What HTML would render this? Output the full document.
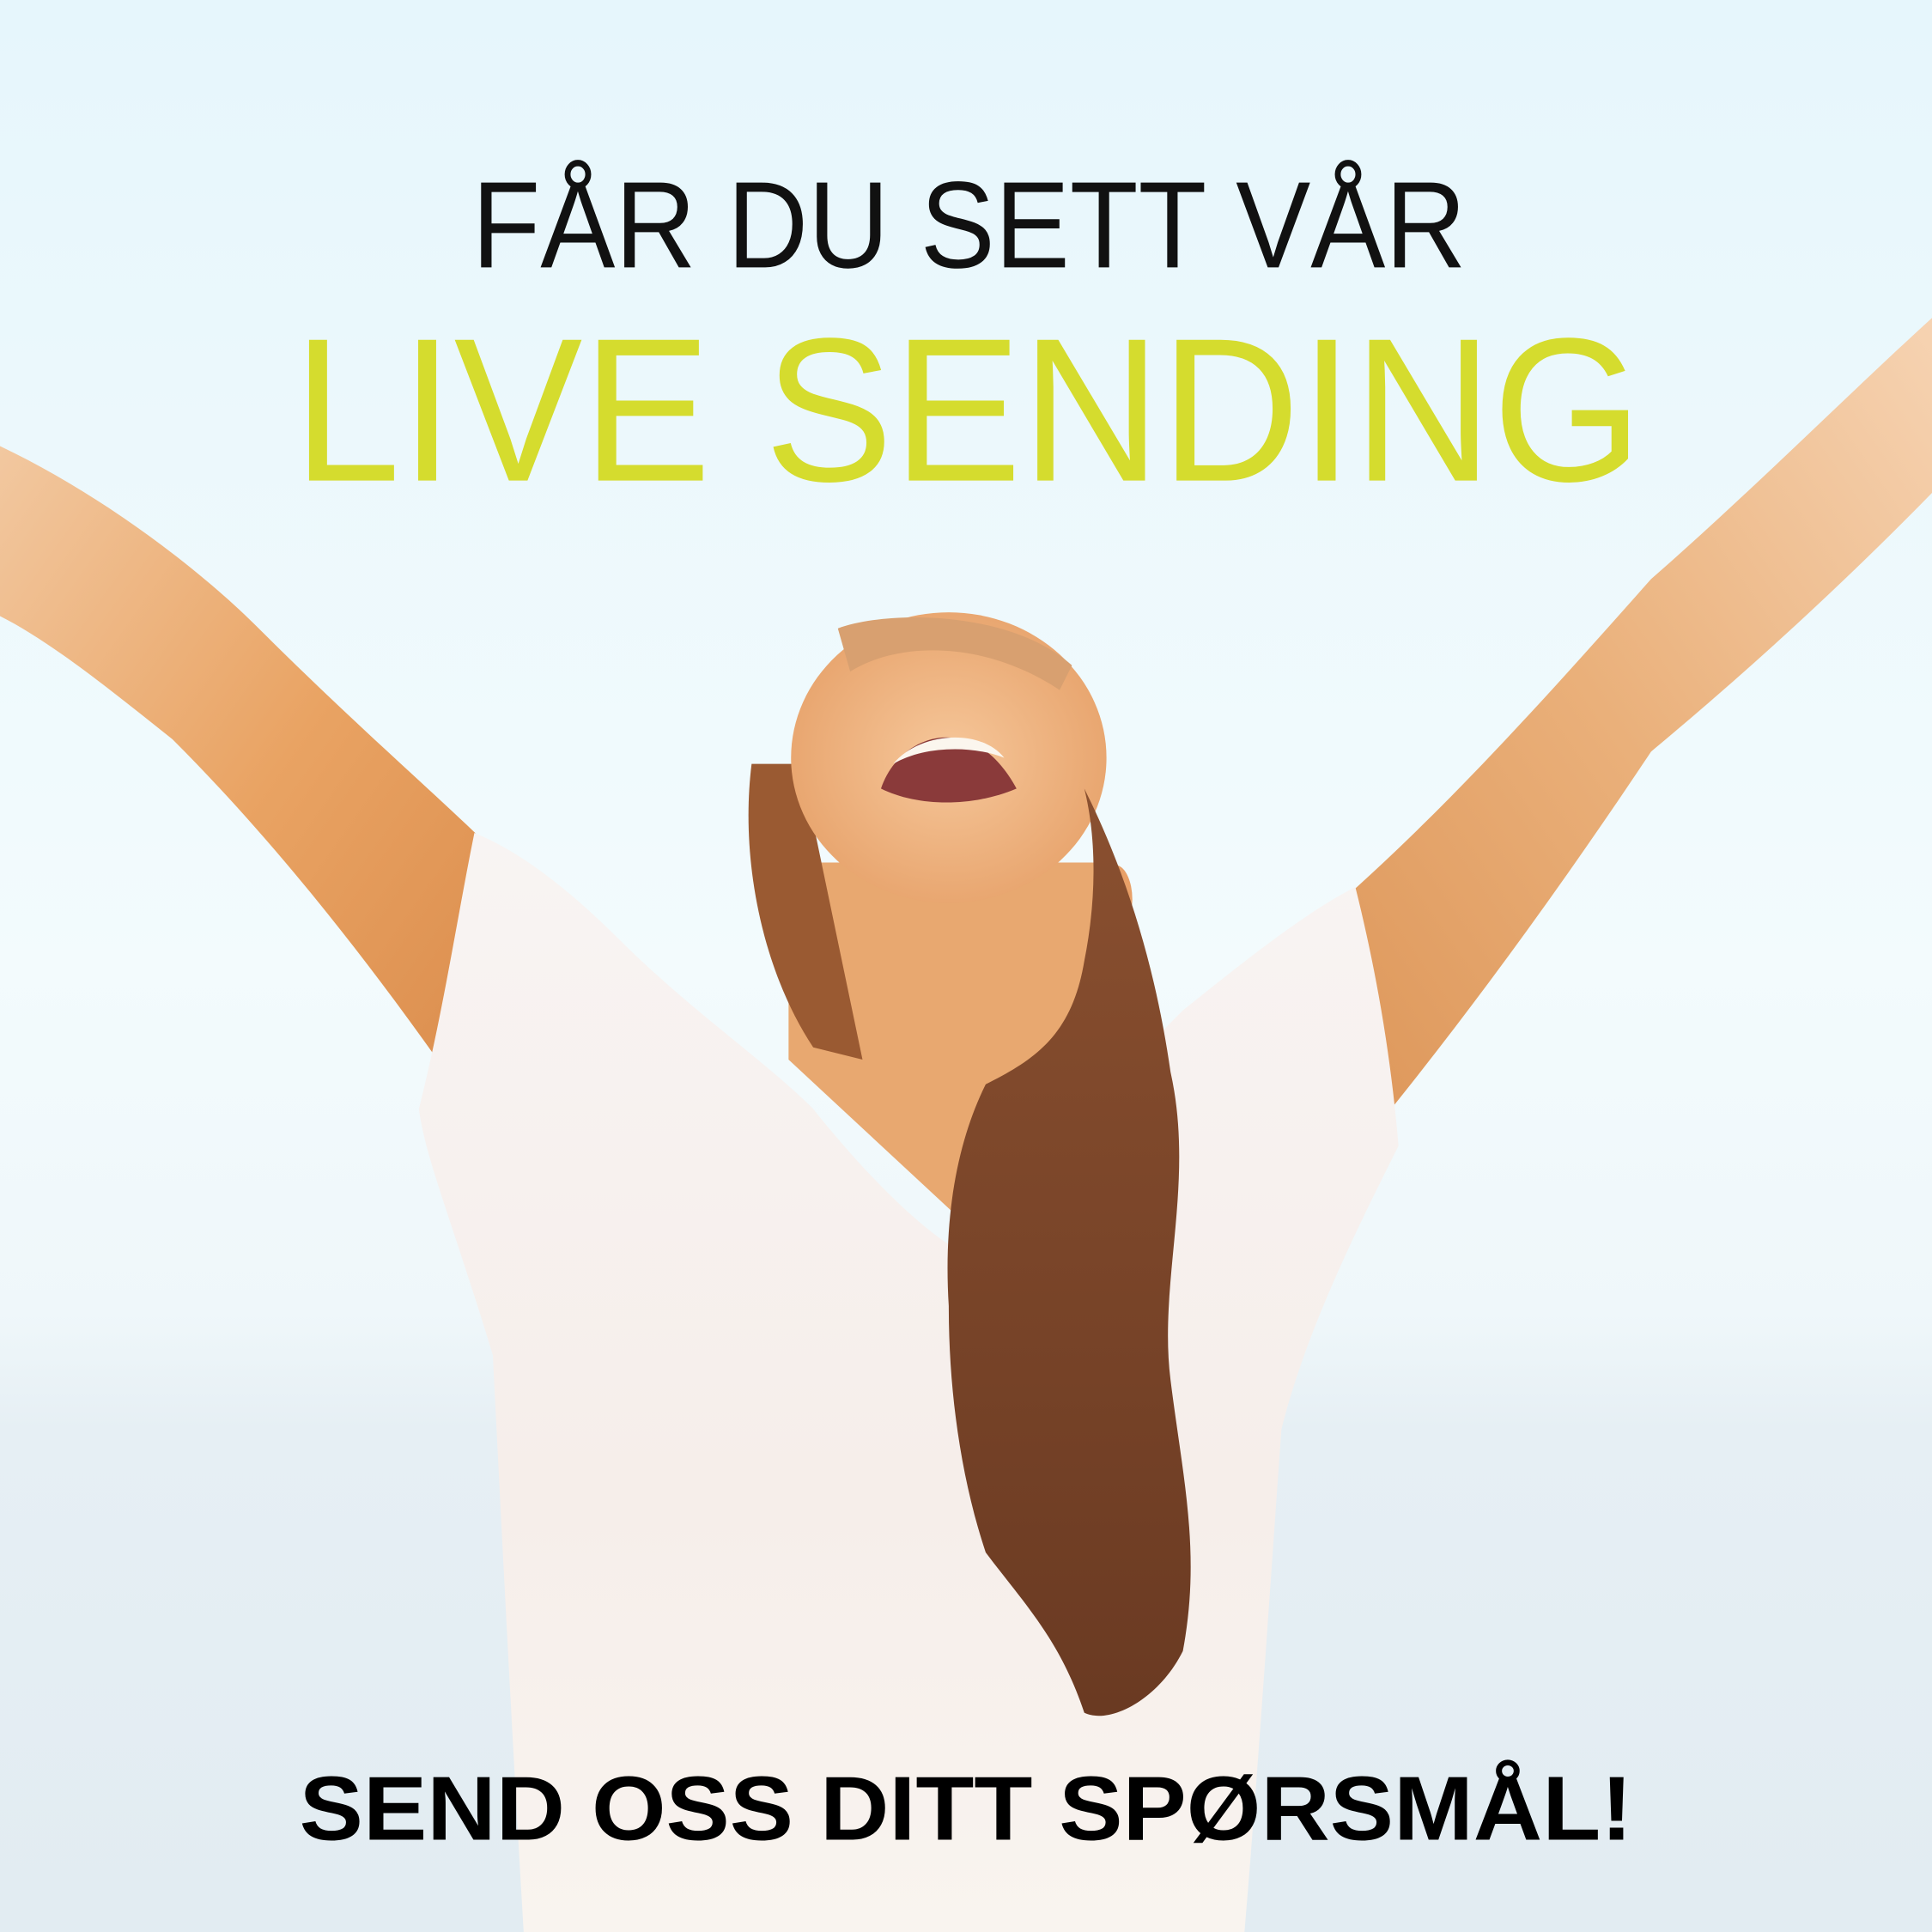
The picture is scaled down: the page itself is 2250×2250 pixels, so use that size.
<!DOCTYPE html>
<html><head><meta charset="utf-8"><style>
html,body{margin:0;padding:0;width:2250px;height:2250px;overflow:hidden}
svg{display:block}
</style></head><body>
<svg width="2250" height="2250" viewBox="0 0 1568 1568" xmlns="http://www.w3.org/2000/svg">
<defs>
<linearGradient id="sky" x1="0" y1="0" x2="0" y2="1">
<stop offset="0" stop-color="#e6f6fc"/><stop offset="0.5" stop-color="#f3fbfd"/><stop offset="0.68" stop-color="#eff7fa"/><stop offset="0.74" stop-color="#e6eff4"/><stop offset="1" stop-color="#e2ecf2"/>
</linearGradient>
<linearGradient id="skinL" x1="0" y1="0" x2="1" y2="1">
<stop offset="0" stop-color="#f2c8a0"/><stop offset="0.5" stop-color="#e9a363"/><stop offset="1" stop-color="#d98a4a"/>
</linearGradient>
<linearGradient id="skinR" x1="1" y1="0" x2="0" y2="1">
<stop offset="0" stop-color="#f6d3b2"/><stop offset="0.5" stop-color="#eab07a"/><stop offset="1" stop-color="#dc9456"/>
</linearGradient>
<linearGradient id="shirt" x1="0" y1="0" x2="0" y2="1">
<stop offset="0" stop-color="#f8f4f3"/><stop offset="0.6" stop-color="#f6eeea"/><stop offset="1" stop-color="#f9f4ef"/>
</linearGradient>
<linearGradient id="hair" x1="0" y1="0" x2="0" y2="1">
<stop offset="0" stop-color="#8a5030"/><stop offset="1" stop-color="#6a3a22"/>
</linearGradient>
<radialGradient id="face" cx="0.5" cy="0.5" r="0.6">
<stop offset="0" stop-color="#f6c79a"/><stop offset="1" stop-color="#e6a068"/>
</radialGradient>
</defs>
<rect width="1568" height="1568" fill="url(#sky)"/>
<path d="M0 362 C80 400 160 460 210 510 C290 590 360 650 400 690 L410 940 C330 820 240 700 140 600 C90 560 40 520 0 500 Z" fill="url(#skinL)"/>
<path d="M1568 258 L1568 400 C1480 490 1400 560 1340 610 C1260 730 1180 840 1080 960 L1090 730 C1180 650 1260 560 1340 470 C1420 400 1500 320 1568 258 Z" fill="url(#skinR)"/>
<path d="M640 700 L900 700 L930 850 L780 990 L640 860 Z" fill="#e8a870"/>
<path d="M610 620 C600 700 620 790 660 850 L700 860 L650 620 Z" fill="#9a5a32"/>
<path d="M385 676 C420 690 460 720 500 760 C560 820 620 860 660 900 C700 950 740 990 770 1010 C830 960 900 880 960 820 C1010 780 1060 740 1100 720 C1120 800 1130 870 1135 930 C1100 1000 1060 1080 1040 1160 C1030 1300 1020 1450 1010 1568 L425 1568 C415 1400 405 1200 400 1100 C370 1000 345 940 340 900 C360 820 370 750 385 676 Z" fill="url(#shirt)"/>
<ellipse cx="770" cy="615" rx="128" ry="118" fill="url(#face)"/>
<path d="M680 510 C720 495 820 495 870 540 L860 560 C800 520 730 520 690 545 Z" fill="#d8a070"/>
<ellipse cx="905" cy="730" rx="14" ry="28" fill="#e8a068"/>
<path d="M715 640 C730 595 790 575 825 640 C790 655 745 655 715 640 Z" fill="#8a3a3a"/>
<path d="M725 620 C745 595 795 590 815 615 C790 605 750 605 725 620 Z" fill="#fbf6ee"/>
<path d="M880 640 C920 720 940 800 950 870 C970 960 940 1040 950 1120 C960 1200 975 1260 960 1340 C940 1380 900 1400 880 1390 C860 1330 830 1300 800 1260 C780 1200 770 1130 770 1060 C765 980 780 920 800 880 C840 860 870 840 880 780 C890 730 890 680 880 640 Z" fill="url(#hair)"/>
<text x="383" y="217" textLength="807" lengthAdjust="spacingAndGlyphs" font-family="Liberation Sans, sans-serif" font-size="100" font-weight="300" fill="#111">FÅR DU SETT VÅR</text>
<text x="238" y="390" textLength="1095" lengthAdjust="spacingAndGlyphs" font-family="Liberation Sans, sans-serif" font-size="166" fill="#d5dc2e">LIVE SENDING</text>
<text x="243" y="1493" textLength="1082" lengthAdjust="spacingAndGlyphs" font-family="Liberation Sans, sans-serif" font-size="74" font-weight="bold" fill="#000">SEND OSS DITT SPØRSMÅL!</text>
</svg>
</body></html>
